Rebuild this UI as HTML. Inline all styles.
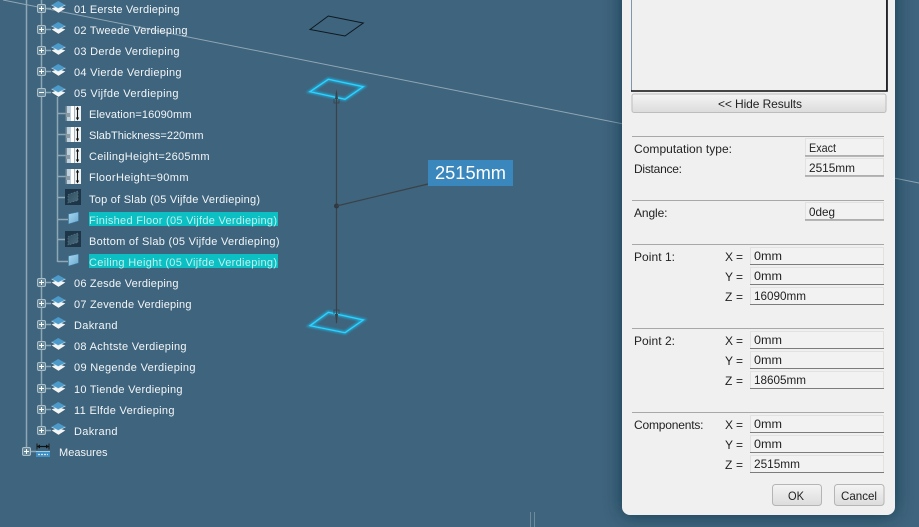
<!DOCTYPE html>
<html>
<head>
<meta charset="utf-8">
<style>
html,body{margin:0;padding:0;width:919px;height:527px;overflow:hidden;background:#3f647d}
svg{display:block;position:absolute;left:0;top:0}
.t text{font-family:"Liberation Sans",sans-serif;font-size:11px;fill:#f3f6f8}
.d text{font-family:"Liberation Sans",sans-serif;font-size:12px;fill:#222}
</style>
</head>
<body>
<svg width="919" height="527" viewBox="0 0 919 527" xmlns="http://www.w3.org/2000/svg">
<defs>
<filter id="sh" x="-20%" y="-20%" width="140%" height="140%"><feGaussianBlur stdDeviation="9"/></filter>
<filter id="gl" x="-30%" y="-30%" width="160%" height="160%"><feGaussianBlur stdDeviation="1"/></filter>
<linearGradient id="btn" x1="0" y1="0" x2="0" y2="1"><stop offset="0" stop-color="#f4f4f4"/><stop offset="1" stop-color="#dcdcdc"/></linearGradient>
<linearGradient id="sheet" x1="0" y1="0" x2="1" y2="1"><stop offset="0" stop-color="#a8d9ef"/><stop offset="1" stop-color="#6aa8d0"/></linearGradient>
<linearGradient id="sl" x1="0" y1="0" x2="1" y2="1"><stop offset="0" stop-color="#2f5062"/><stop offset="1" stop-color="#4a6b7c"/></linearGradient>
<symbol id="box" overflow="visible" viewBox="0 0 1 1" width="1" height="1">
<rect x="-4" y="-4" width="8" height="8" rx="1.5" fill="#648799" stroke="#aebfca"/>
<path d="M-2.500 0H2.500M0-2.500V2.500" stroke="#fff" stroke-width="1"/>
</symbol>
<symbol id="minus" overflow="visible" viewBox="0 0 1 1" width="1" height="1">
<rect x="-4" y="-4" width="8" height="8" rx="1.5" fill="#648799" stroke="#aebfca"/>
<path d="M-2.500 0H2.500" stroke="#fff" stroke-width="1"/>
</symbol>
<symbol id="lay" overflow="visible" viewBox="0 0 1 1" width="1" height="1">
<path d="M0.500-0.500L7-3L14.500-0.500L7.500 4Z" fill="#f4f6f6"/>
<path d="M0.500-0.500L7.500 4L14.500-0.500" fill="none" stroke="#22384a" stroke-width=".5" opacity=".5"/>
<path d="M0.500-4L7.200-8L14.500-4L7.200-0.500Z" fill="#4b9aca"/>
<path d="M0.500-4L7.200-0.500L14.500-4" fill="none" stroke="#cfe8f3" stroke-width=".6"/>
</symbol>
<symbol id="par" overflow="visible" viewBox="0 0 1 1" width="1" height="1">
<rect x="0.500" y="-8" width="15.500" height="15" fill="#eef1f2"/>
<rect x="0.500" y="-8" width="1.500" height="15" fill="#7b8b96"/>
<rect x="2" y="-8" width="4" height="15" fill="#bdd2de"/>
<rect x="1" y="-1" width="4" height="4" fill="#8a9ba6"/>
<rect x="6" y="-8" width="3" height="15" fill="#fff"/>
<rect x="9" y="-8" width="1" height="15" fill="#a9b4bb"/>
<path d="M12.500-6V5" stroke="#111" stroke-width="1.100" fill="none"/>
<path d="M12.500-7.500L10.800-4.500H14.200ZM12.500 6.500L10.800 3.500H14.200Z" fill="#111"/>
</symbol>
<symbol id="slab" overflow="visible" viewBox="0 0 1 1" width="1" height="1">
<rect x="0" y="-8" width="16" height="16" fill="#1d3547"/>
<path d="M3-2.500L13-6V3.500L3 6Z" fill="url(#sl)" stroke="#60808f" stroke-width=".6" stroke-dasharray="1.500 1.500"/>
</symbol>
<symbol id="sht" overflow="visible" viewBox="0 0 1 1" width="1" height="1">
<path d="M0-4L10-6V3L0 6Z" fill="url(#sheet)" stroke="#3c7ba4" stroke-width=".5"/>
</symbol>
</defs>

<!-- viewport -->
<rect width="919" height="527" fill="#3f647d"/>
<path d="M3 0L919 183" stroke="#8fa6b5" stroke-width="1" fill="none"/>
<path d="M530.500 512V527M534.500 512V527" stroke="#71899a" stroke-width="1"/>

<path d="M310 29.500L328.300 16L363.300 23L345 36Z" fill="none" stroke="#0d1820" stroke-width="1"/>

<path d="M310 91.700L328.300 79.300L363.300 86.700L345 99.300Z" fill="none" stroke="#19c6ff" stroke-width="3.500" opacity=".6" filter="url(#gl)"/>
<path d="M310 91.700L328.300 79.300L363.300 86.700L345 99.300Z" fill="none" stroke="#2bd4ff" stroke-width="1.300"/>
<path d="M310 325.700L328.300 312.300L363.300 320L345 332.700Z" fill="none" stroke="#19c6ff" stroke-width="3.500" opacity=".6" filter="url(#gl)"/>
<path d="M310 325.700L328.300 312.300L363.300 320L345 332.700Z" fill="none" stroke="#2bd4ff" stroke-width="1.300"/>

<path d="M336.500 92V323" stroke="#3a4248" stroke-width="1.200"/>
<path d="M336.500 89L335 99H338Z" fill="#3a4248"/>
<path d="M333.500 103H339.500M334 99V103M339 99V103" stroke="#3a4248" stroke-width=".8" fill="none"/>
<path d="M336.500 324L335 314H338Z" fill="#3a4248"/>
<path d="M333.500 310H339.500M334 310V314M339 310V314" stroke="#3a4248" stroke-width=".8" fill="none"/>
<circle cx="336.500" cy="206" r="2.500" fill="#2f383e"/>
<path d="M336.500 206L428 184" stroke="#3a4248" stroke-width="1.200"/>
<rect x="428" y="160" width="85" height="26" fill="#3a87bd"/>
<text x="435" y="179" font-family="'Liberation Sans',sans-serif" font-size="18" fill="#fff" textLength="71" lengthAdjust="spacingAndGlyphs">2515mm</text>

<!-- tree lines -->
<g stroke="#8ea7b7" stroke-width="1.500" fill="none">
<path d="M26.500 0V452M41.500 0V431M57.500 97V262"/>
<path d="M26.500 451.500H36M41.500 8.500H51M41.500 29.500H51M41.500 50.500H51M41.500 71.500H51M41.500 92.500H51M41.500 282.500H51M41.500 303.500H51M41.500 324.500H51M41.500 345.500H51M41.500 366.500H51M41.500 388.500H51M41.500 409.500H51M41.500 430.500H51"/>
<path d="M57.500 113.500H66M57.500 134.500H66M57.500 155.500H66M57.500 176.500H66M57.500 197.500H66M57.500 219.500H68M57.500 239.500H66M57.500 261.500H68"/>
</g>

<!-- expanders + icons -->
<g>
<use href="#box" x="41.500" y="8.500"/><use href="#lay" x="51" y="9"/>
<use href="#box" x="41.500" y="29.500"/><use href="#lay" x="51" y="30"/>
<use href="#box" x="41.500" y="50.500"/><use href="#lay" x="51" y="51"/>
<use href="#box" x="41.500" y="71.500"/><use href="#lay" x="51" y="72"/>
<use href="#minus" x="41.500" y="92.500"/><use href="#lay" x="51" y="93"/>
<use href="#box" x="41.500" y="282.500"/><use href="#lay" x="51" y="283"/>
<use href="#box" x="41.500" y="303.500"/><use href="#lay" x="51" y="304"/>
<use href="#box" x="41.500" y="324.500"/><use href="#lay" x="51" y="325"/>
<use href="#box" x="41.500" y="345.500"/><use href="#lay" x="51" y="346"/>
<use href="#box" x="41.500" y="366.500"/><use href="#lay" x="51" y="367"/>
<use href="#box" x="41.500" y="388.500"/><use href="#lay" x="51" y="389"/>
<use href="#box" x="41.500" y="409.500"/><use href="#lay" x="51" y="410"/>
<use href="#box" x="41.500" y="430.500"/><use href="#lay" x="51" y="431"/>
<use href="#box" x="26.500" y="451.500"/>
<use href="#par" x="65" y="114"/><use href="#par" x="65" y="135"/><use href="#par" x="65" y="156"/><use href="#par" x="65" y="177"/>
<use href="#slab" x="65" y="197"/><use href="#slab" x="65" y="239"/>
<use href="#sht" x="68.500" y="218"/><use href="#sht" x="68.500" y="260"/>
<!-- measures icon -->
<path d="M37 446.500H49" stroke="#111" stroke-width="1.200"/>
<path d="M37 443.500V449.500M49 443.500V449.500" stroke="#1a1a1a" stroke-width="1"/>
<path d="M37 446.500L40 444.500V448.500ZM49 446.500L46 444.500V448.500Z" fill="#111"/>
<rect x="36" y="451.500" width="14" height="5.500" fill="#3f8fc4"/>
<path d="M36 451.500H50" stroke="#9ccbe6" stroke-width="1"/>
<path d="M38 454.500H48" stroke="#d7e6ee" stroke-width="1.200" stroke-dasharray="2 1"/>
</g>

<!-- highlights -->
<rect x="89" y="212" width="189" height="14" fill="#0bbfc2"/>
<rect x="89" y="254" width="189" height="14" fill="#0bbfc2"/>

<!-- tree text -->
<g class="t">
<text x="74" y="13" textLength="105.500">01 Eerste Verdieping</text>
<text x="74" y="34" textLength="113.500">02 Tweede Verdieping</text>
<text x="74" y="55" textLength="105.500">03 Derde Verdieping</text>
<text x="74" y="76" textLength="107.500">04 Vierde Verdieping</text>
<text x="74" y="97" textLength="104.500">05 Vijfde Verdieping</text>
<text x="89" y="118" textLength="102.500">Elevation=16090mm</text>
<text x="89" y="139" textLength="114.500">SlabThickness=220mm</text>
<text x="89" y="160" textLength="120.500">CeilingHeight=2605mm</text>
<text x="89" y="181" textLength="99.500">FloorHeight=90mm</text>
<text x="89" y="203" textLength="171">Top of Slab (05 Vijfde Verdieping)</text>
<text x="89" y="224" textLength="188" style="fill:#bdf0f0">Finished Floor (05 Vijfde Verdieping)</text>
<text x="89" y="245" textLength="190.500">Bottom of Slab (05 Vijfde Verdieping)</text>
<text x="89" y="266" textLength="188" style="fill:#bdf0f0">Ceiling Height (05 Vijfde Verdieping)</text>
<text x="74" y="287" textLength="104.500">06 Zesde Verdieping</text>
<text x="74" y="308" textLength="117.500">07 Zevende Verdieping</text>
<text x="74" y="329" textLength="43.500">Dakrand</text>
<text x="74" y="350" textLength="112.500">08 Achtste Verdieping</text>
<text x="74" y="371" textLength="121.500">09 Negende Verdieping</text>
<text x="74" y="393" textLength="108.500">10 Tiende Verdieping</text>
<text x="74" y="414" textLength="100.500">11 Elfde Verdieping</text>
<text x="74" y="435" textLength="43.500">Dakrand</text>
<text x="59" y="456" textLength="48.500">Measures</text>
</g>

<!-- dialog -->
<rect x="622" y="-20" width="273" height="535" rx="8" fill="#0f2a3d" opacity=".7" filter="url(#sh)"/>
<rect x="622" y="-20" width="273" height="535" rx="8" fill="#f0f0f0"/>

<rect x="631.500" y="-2" width="255" height="93" fill="#f0f0f0" stroke="#7f97ad" stroke-width="1"/>
<path d="M887 -2V91H631" stroke="#0a0a0a" stroke-width="1.600" fill="none"/>
<rect x="632" y="94" width="254" height="18.500" rx="2" fill="url(#btn)" stroke="#bdbdbd"/>

<g stroke="#a8a8a8" stroke-width="1" fill="none">
<path d="M632 136.500H884M632 200.500H884M632 244.500H884M632 328.500H884M632 412.500H884"/>
</g>

<g fill="#f2f2f2" stroke="#e2e2e2" stroke-width="1">
<rect x="805.500" y="138.500" width="78" height="17"/>
<rect x="805.500" y="158.500" width="78" height="17"/>
<rect x="805.500" y="202.500" width="78" height="17"/>
<rect x="750.500" y="247.500" width="133" height="17"/>
<rect x="750.500" y="267.500" width="133" height="17"/>
<rect x="750.500" y="287.500" width="133" height="17"/>
<rect x="750.500" y="331.500" width="133" height="17"/>
<rect x="750.500" y="351.500" width="133" height="17"/>
<rect x="750.500" y="371.500" width="133" height="17"/>
<rect x="750.500" y="415.500" width="133" height="17"/>
<rect x="750.500" y="435.500" width="133" height="17"/>
<rect x="750.500" y="455.500" width="133" height="17"/>
</g>
<g stroke="#7c7c7c" stroke-width="1" fill="none">
<path d="M805 156H884M805 176H884M805 220H884"/>
<path d="M750 264.500H884M750 284.500H884M750 304.500H884M750 348.500H884M750 368.500H884M750 388.500H884M750 432.500H884M750 452.500H884M750 472.500H884"/>
</g>

<rect x="772.500" y="484.500" width="49" height="21" rx="3" fill="url(#btn)" stroke="#b5b5b5"/>
<rect x="834.500" y="484.500" width="49.500" height="21" rx="3" fill="url(#btn)" stroke="#b5b5b5"/>

<g class="d">
<text x="718" y="108" textLength="84">&lt;&lt; Hide Results</text>
<text x="634" y="153" textLength="98">Computation type:</text>
<text x="634" y="173" textLength="48">Distance:</text>
<text x="634" y="217" textLength="33.500">Angle:</text>
<text x="809" y="152" textLength="27" lengthAdjust="spacingAndGlyphs">Exact</text>
<text x="809" y="172" textLength="46" lengthAdjust="spacingAndGlyphs">2515mm</text>
<text x="809" y="216" textLength="26" lengthAdjust="spacingAndGlyphs">0deg</text>

<text x="634" y="261" textLength="41">Point 1:</text>
<text x="725" y="261" textLength="18">X =</text>
<text x="725" y="281" textLength="18">Y =</text>
<text x="725" y="301" textLength="18">Z =</text>
<text x="754" y="260" textLength="28" lengthAdjust="spacingAndGlyphs">0mm</text>
<text x="754" y="280" textLength="28" lengthAdjust="spacingAndGlyphs">0mm</text>
<text x="754" y="300" textLength="52" lengthAdjust="spacingAndGlyphs">16090mm</text>

<text x="634" y="345" textLength="41">Point 2:</text>
<text x="725" y="345" textLength="18">X =</text>
<text x="725" y="365" textLength="18">Y =</text>
<text x="725" y="385" textLength="18">Z =</text>
<text x="754" y="344" textLength="28" lengthAdjust="spacingAndGlyphs">0mm</text>
<text x="754" y="364" textLength="28" lengthAdjust="spacingAndGlyphs">0mm</text>
<text x="754" y="384" textLength="52" lengthAdjust="spacingAndGlyphs">18605mm</text>

<text x="634" y="429" textLength="69.500">Components:</text>
<text x="725" y="429" textLength="18">X =</text>
<text x="725" y="449" textLength="18">Y =</text>
<text x="725" y="469" textLength="18">Z =</text>
<text x="754" y="428" textLength="28" lengthAdjust="spacingAndGlyphs">0mm</text>
<text x="754" y="448" textLength="28" lengthAdjust="spacingAndGlyphs">0mm</text>
<text x="754" y="468" textLength="46" lengthAdjust="spacingAndGlyphs">2515mm</text>

<text x="788" y="500" textLength="16" lengthAdjust="spacingAndGlyphs">OK</text>
<text x="841" y="500" textLength="36" lengthAdjust="spacingAndGlyphs">Cancel</text>
</g>
</svg>
</body>
</html>
